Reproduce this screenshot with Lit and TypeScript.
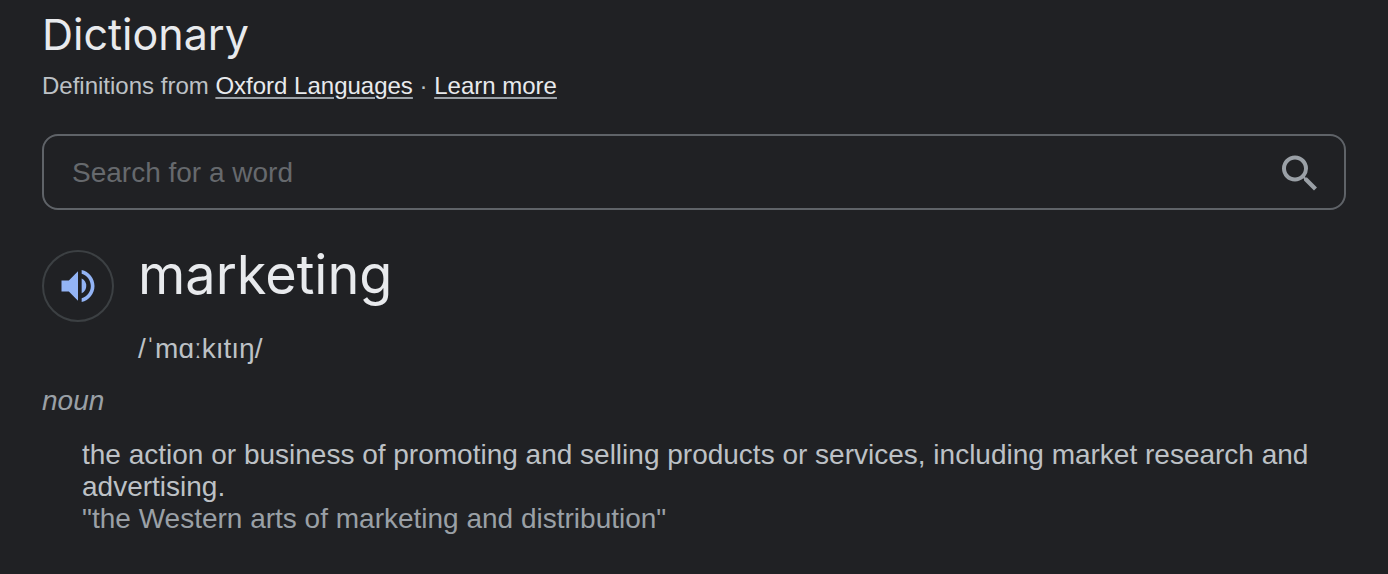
import { LitElement, html, css } from "lit";
import { customElement } from "lit/decorators.js";

@customElement("app-root")
export class AppRoot extends LitElement {
  static styles = css`
    :host {
      display: block;
      box-sizing: border-box;
      min-height: 100vh;
      padding: 8px 42px 38px;
      background: #202124;
      color: #bdc1c6;
      font: 28px/32px "Liberation Sans", Arial, sans-serif;
    }
    h1, h2, p { margin: 0; font-weight: 400; }
    h1, h2 { color: #e8eaed; font-family: "Google Sans", Inter, sans-serif; }
    h1 { font-size: 43px; line-height: 52px; }
    .source { margin-top: 10px; font-size: 24px; line-height: 32px; }
    .source a {
      color: #e8eaed;
      text-decoration: underline 2px #9aa0a6;
      text-underline-offset: 3px;
    }
    .search {
      display: flex;
      align-items: center;
      box-sizing: border-box;
      height: 76px;
      margin-top: 32px;
      padding: 2px 20px 0 28px;
      border: 2px solid #5f6368;
      border-radius: 16px;
    }
    .search input {
      flex: 1;
      min-width: 0;
      padding: 0;
      border: 0;
      outline: 0;
      background: none;
      color: #e8eaed;
      font: inherit;
    }
    .search input::placeholder { color: #66696d; opacity: 1; }
    button { display: flex; padding: 0; border: 0; background: none; cursor: pointer; }
    .find { color: #9aa0a6; }
    .entry { display: flex; gap: 24px; margin-top: 40px; }
    .listen {
      flex: none;
      align-items: center;
      justify-content: center;
      box-sizing: border-box;
      width: 72px;
      height: 72px;
      border: 2px solid #3c4043;
      border-radius: 50%;
      color: #93b4f5;
    }
    svg { display: block; fill: currentColor; }
    h2 { font-size: 54px; line-height: 50px; }
    .phonetic { margin-top: 33px; }
    .class { margin-top: 20px; color: #9aa0a6; font-style: italic; }
    .sense { margin: 22px 0 0 40px; }
    .example { color: #9aa0a6; }
  `;

  render() {
    return html`
      <header>
        <h1>Dictionary</h1>
        <p class="source">
          Definitions from <a href="#oxford">Oxford Languages</a> · <a href="#more">Learn more</a>
        </p>
      </header>
      <form class="search" role="search" @submit=${(e: Event) => e.preventDefault()}>
        <input type="text" aria-label="Search for a word" placeholder="Search for a word" />
        <button class="find" aria-label="Search">
          <svg width="48" height="48" viewBox="0 -0.25 24 24">
            <path d="M15.5 14h-.79l-.28-.27A6.47 6.47 0 0 0 16 9.5 6.5 6.5 0 1 0 9.5 16c1.61 0 3.09-.59 4.23-1.57l.27.28v.79l5 4.99L20.49 19l-4.99-5zm-6 0C7.01 14 5 11.99 5 9.5S7.01 5 9.5 5 14 7.01 14 9.5 11.99 14 9.5 14z" />
          </svg>
        </button>
      </form>
      <main>
        <div class="entry">
          <button class="listen" type="button" aria-label="Listen">
            <svg width="44" height="44" viewBox="0 0 24 24">
              <path d="M3 9v6h4l5 5V4L7 9H3zm13.5 3A4.5 4.5 0 0 0 14 7.97v8.05A4.47 4.47 0 0 0 16.5 12zM14 3.23v2.06c2.89.86 5 3.54 5 6.71s-2.11 5.85-5 6.71v2.06c4.01-.91 7-4.49 7-8.77s-2.99-7.86-7-8.77z" />
            </svg>
          </button>
          <div>
            <h2>marketing</h2>
            <p class="phonetic">/ˈmɑːkıtıŋ/</p>
          </div>
        </div>
        <p class="class">noun</p>
        <div class="sense">
          <p>the action or business of promoting and selling products or services, including market research and advertising.</p>
          <p class="example">"the Western arts of marketing and distribution"</p>
        </div>
      </main>
    `;
  }
}
